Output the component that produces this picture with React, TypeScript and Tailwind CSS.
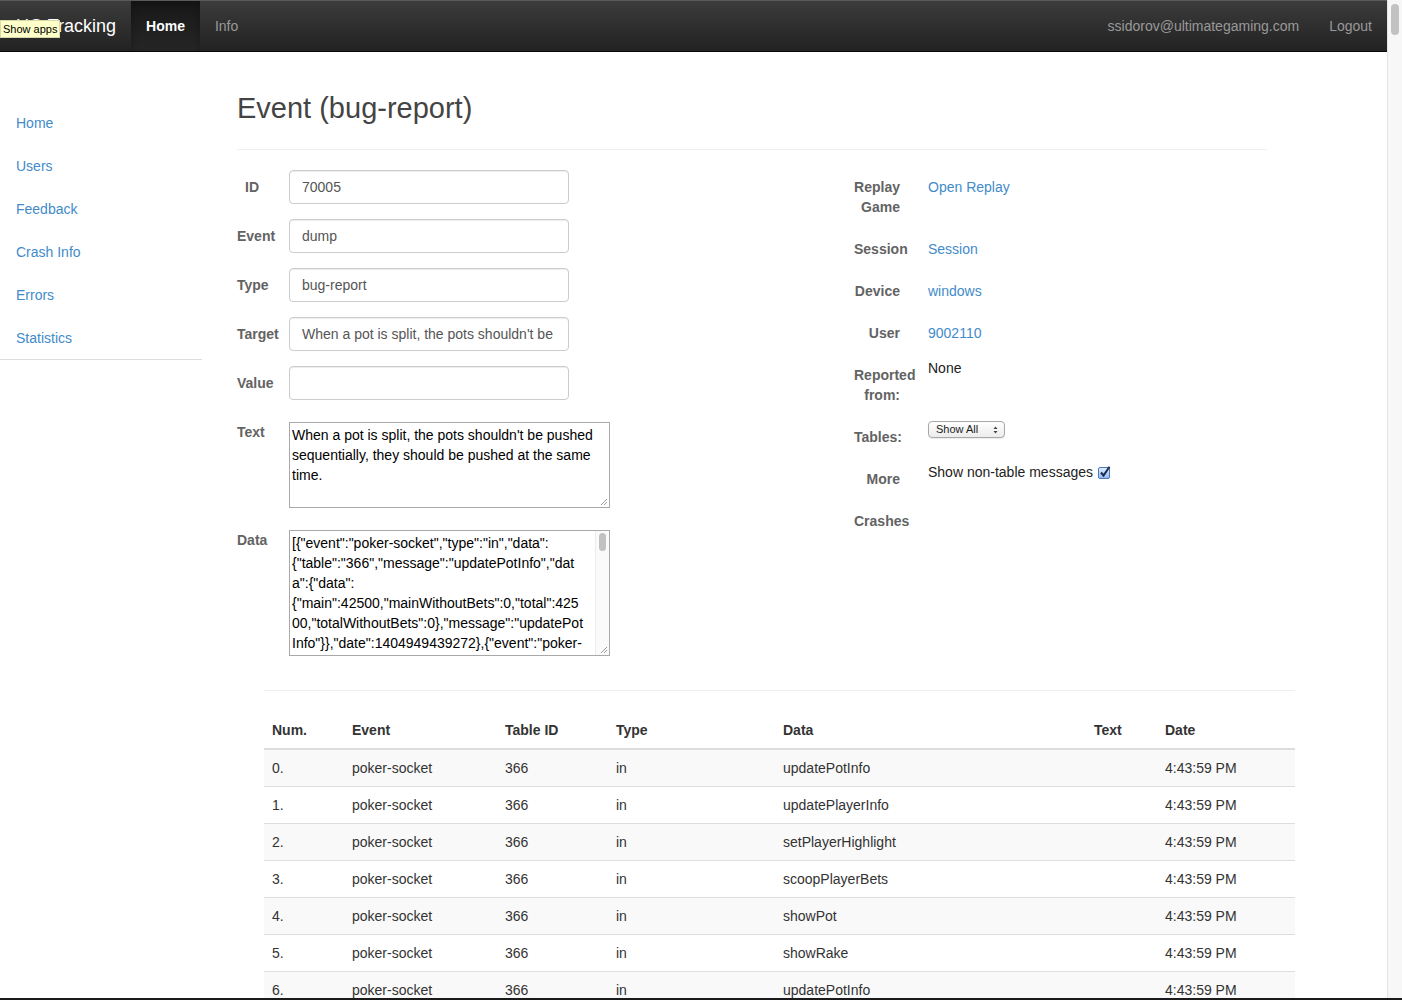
import React from "react";

const sideLinks = ["Home", "Users", "Feedback", "Crash Info", "Errors", "Statistics"];

const inputRows = [
	{ label: "ID", value: "70005" },
	{ label: "Event", value: "dump" },
	{ label: "Type", value: "bug-report" },
	{ label: "Target", value: "When a pot is split, the pots shouldn't be pushed sequentially" },
	{ label: "Value", value: "" },
];

const textLines = [
	"When a pot is split, the pots shouldn't be pushed",
	"sequentially, they should be pushed at the same",
	"time.",
];

const dataLines = [
	'[{"event":"poker-socket","type":"in","data":',
	'{"table":"366","message":"updatePotInfo","dat',
	'a":{"data":',
	'{"main":42500,"mainWithoutBets":0,"total":425',
	'00,"totalWithoutBets":0},"message":"updatePot',
	'Info"}},"date":1404949439272},{"event":"poker-',
	'socket","type":"in","data":',
];

const events = [
	"updatePotInfo",
	"updatePlayerInfo",
	"setPlayerHighlight",
	"scoopPlayerBets",
	"showPot",
	"showRake",
	"updatePotInfo",
	"updatePlayerInfo",
	"showPot",
];

function Grip() {
	return (
		<svg
			className="absolute bottom-[1px] right-[1px]"
			width="9"
			height="9"
			viewBox="0 0 9 9"
		>
			<path d="M8 2 L2 8 M8 5 L5 8" stroke="#9a9a9a" strokeWidth="1" />
		</svg>
	);
}

function NavBar() {
	return (
		<nav className="flex h-[52px] shrink-0 items-stretch border-t border-b border-t-[#5a5a5a] border-b-[#080808] bg-gradient-to-b from-[#3c3c3c] to-[#222222]">
			<div className="relative flex items-center px-[15px] pl-[16px] text-[18px] text-white">
				UG Tracking
				<span className="absolute left-0 top-[19px] border border-[#d8d8a8] bg-[#ffffca] px-[2px] text-[11px] leading-[16px] text-black">
					Show apps
				</span>
			</div>
			<a className="flex items-center bg-gradient-to-b from-[#181818] to-[#262626] px-[15px] font-bold text-white shadow-[inset_0_3px_9px_rgba(0,0,0,0.25)]">
				Home
			</a>
			<a className="flex items-center px-[15px] text-[#999]">Info</a>
			<div className="ml-auto flex">
				<a className="flex items-center px-[15px] text-[#999]">
					ssidorov@ultimategaming.com
				</a>
				<a className="flex items-center px-[15px] text-[#999]">Logout</a>
			</div>
		</nav>
	);
}

function Sidebar() {
	return (
		<aside className="w-[202px] shrink-0 pt-[49px]">
			<ul className="border-b border-[#ddd]">
				{sideLinks.map((l) => (
					<li key={l} className="flex h-[43px] items-center pl-[16px] text-[#428bca]">
						{l}
					</li>
				))}
			</ul>
		</aside>
	);
}

function LeftForm() {
	return (
		<section className="w-[617px] shrink-0">
			<div className="flex flex-col gap-[15px]">
				{inputRows.map((r) => (
					<div key={r.label} className="flex h-[34px] items-center">
						<label className="w-[22px] whitespace-nowrap text-right font-bold text-[#636363]">
							{r.label}
						</label>
						<input
							readOnly
							value={r.value}
							className="ml-[30px] h-[34px] w-[280px] rounded-[4px] border border-[#ccc] px-[12px] text-[#555] shadow-[inset_0_1px_1px_rgba(0,0,0,0.075)] outline-none"
						/>
					</div>
				))}
			</div>

			<div className="mt-[22px] flex items-start">
				<label className="w-[22px] whitespace-nowrap text-right font-bold text-[#636363]">
					Text
				</label>
				<div className="relative ml-[30px] h-[86px] w-[321px] overflow-hidden border border-[#a9a9a9] pl-[2px] pt-[2px] text-black">
					{textLines.map((l, i) => (
						<div key={i} className="whitespace-nowrap">
							{l}
						</div>
					))}
					<Grip />
				</div>
			</div>

			<div className="mt-[22px] flex items-start">
				<label className="w-[22px] whitespace-nowrap text-right font-bold text-[#636363]">
					Data
				</label>
				<div className="relative ml-[30px] flex h-[126px] w-[321px] overflow-hidden border border-[#a9a9a9] text-black">
					<div className="flex-1 overflow-hidden pl-[2px] pt-[2px]">
						{dataLines.map((l, i) => (
							<div key={i} className="whitespace-nowrap">
								{l}
							</div>
						))}
					</div>
					<div className="w-[14px] shrink-0 border-l border-[#ececec] bg-[#fafafa] pt-[2px]">
						<div className="mx-auto h-[18px] w-[7px] rounded-full bg-[#c1c1c1]" />
					</div>
					<Grip />
				</div>
			</div>
		</section>
	);
}

function InfoRow({
	label,
	tall,
	children,
}: {
	label: React.ReactNode;
	tall?: boolean;
	children?: React.ReactNode;
}) {
	return (
		<div className={`flex ${tall ? "h-[62px]" : "h-[42px]"}`}>
			<div className="flex w-[46px] shrink-0 items-center">
				<div className="w-[46px] whitespace-nowrap text-right font-bold text-[#636363]">
					{label}
				</div>
			</div>
			<div className="ml-[28px]">{children}</div>
		</div>
	);
}

function RightInfo() {
	return (
		<section className="-mt-[4px] flex flex-col">
			<InfoRow
				tall
				label={
					<>
						Replay
						<br />
						Game
					</>
				}
			>
				<a className="block pt-[11px] text-[#428bca]">Open Replay</a>
			</InfoRow>
			<InfoRow label="Session">
				<a className="block pt-[11px] text-[#428bca]">Session</a>
			</InfoRow>
			<InfoRow label="Device">
				<a className="block pt-[11px] text-[#428bca]">windows</a>
			</InfoRow>
			<InfoRow label="User">
				<a className="block pt-[11px] text-[#428bca]">9002110</a>
			</InfoRow>
			<InfoRow
				tall
				label={
					<>
						Reported
						<br />
						from:
					</>
				}
			>
				<div className="pt-[4px] text-[#222]">None</div>
			</InfoRow>
			<InfoRow label="Tables:">
				<div className="pt-[5px]">
					<div className="flex h-[17px] w-[77px] items-center justify-between rounded-[4px] border border-[#a8a8a8] bg-gradient-to-b from-white to-[#ececec] pl-[7px] pr-[6px] text-[11px] leading-[15px] text-[#222] shadow-[0_1px_1px_rgba(0,0,0,0.08)]">
						<span>Show All</span>
						<svg width="5" height="8" viewBox="0 0 5 8">
							<path d="M2.5 0.5 L4.5 3 L0.5 3 Z M0.5 5 L4.5 5 L2.5 7.5 Z" fill="#444" />
						</svg>
					</div>
				</div>
			</InfoRow>
			<InfoRow label="More">
				<div className="flex items-center gap-[5px] pt-[4px] text-[#222]">
					<span>Show non-table messages</span>
					<svg width="13" height="13" viewBox="0 0 13 13">
						<defs>
							<linearGradient id="cb" x1="0" y1="0" x2="0" y2="1">
								<stop offset="0" stopColor="#e3efff" />
								<stop offset="1" stopColor="#8fb7ee" />
							</linearGradient>
						</defs>
						<rect x="0.5" y="1.5" width="11" height="11" rx="1.5" fill="url(#cb)" stroke="#4f78b8" />
						<path d="M3 6.5 L5.5 9.5 L11.5 0.8" fill="none" stroke="#1b2b4f" strokeWidth="2" />
					</svg>
				</div>
			</InfoRow>
			<InfoRow label="Crashes" />
		</section>
	);
}

function EventsTable() {
	return (
		<div className="ml-[27px] mt-[34px] w-[1031px] border-t border-[#eee] pt-[21px]">
			<table className="w-[1031px] table-fixed border-collapse text-left">
				<colgroup>
					<col className="w-[80px]" />
					<col className="w-[153px]" />
					<col className="w-[111px]" />
					<col className="w-[167px]" />
					<col className="w-[311px]" />
					<col className="w-[71px]" />
					<col className="w-[138px]" />
				</colgroup>
				<thead>
					<tr className="border-b-2 border-[#ddd]">
						{["Num.", "Event", "Table ID", "Type", "Data", "Text", "Date"].map((h) => (
							<th key={h} className="px-[8px] py-[8px] font-bold">
								{h}
							</th>
						))}
					</tr>
				</thead>
				<tbody>
					{events.map((e, i) => (
						<tr
							key={i}
							className={`border-t border-[#ddd] ${i % 2 === 0 ? "bg-[#f9f9f9]" : "bg-white"}`}
						>
							<td className="p-[8px]">{i}.</td>
							<td className="p-[8px]">poker-socket</td>
							<td className="p-[8px]">366</td>
							<td className="p-[8px]">in</td>
							<td className="p-[8px]">{e}</td>
							<td className="p-[8px]" />
							<td className="p-[8px]">4:43:59 PM</td>
						</tr>
					))}
				</tbody>
			</table>
		</div>
	);
}

export default function App() {
	return (
		<div className="flex h-[1000px] w-[1402px] flex-col overflow-hidden bg-white font-['Liberation_Sans',Arial,sans-serif] text-[14px] leading-[20px] text-[#333]">
			<div className="flex min-h-0 flex-1">
				<div className="flex w-[1387px] shrink-0 flex-col">
					<NavBar />
					<div className="flex min-h-0 flex-1">
						<Sidebar />
						<main className="ml-[35px] flex-1">
							<header className="mt-[40px] w-[1030px] border-b border-[#eee] pb-[24px]">
								<h1 className="text-[29px] leading-[33px] text-[#444]">
									Event (bug-report)
								</h1>
							</header>
							<div className="mt-[20px] flex">
								<LeftForm />
								<RightInfo />
							</div>
							<EventsTable />
						</main>
					</div>
				</div>
				<div className="w-[15px] shrink-0 border-l border-[#e4e4e4] bg-[#f7f7f7] pt-[4px]">
					<div className="mx-auto h-[31px] w-[8px] rounded-full bg-[#c2c2c2]" />
				</div>
			</div>
			<div className="h-[2px] shrink-0 bg-[#1a1a1a]" />
		</div>
	);
}
